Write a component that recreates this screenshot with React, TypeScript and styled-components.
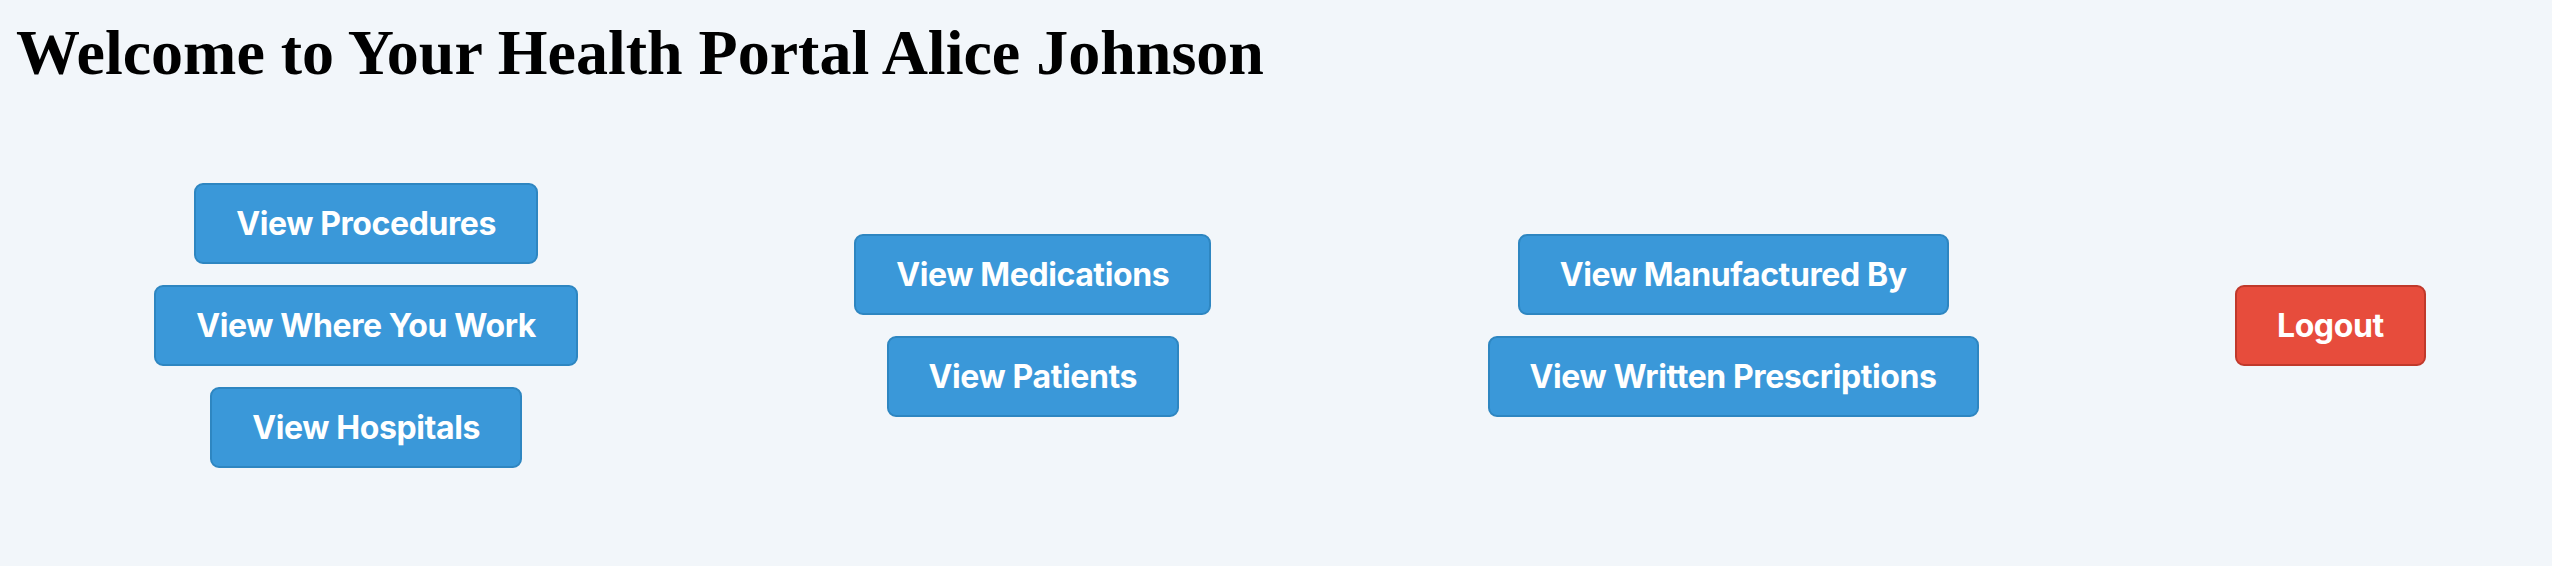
import React from "react";
import styled, { createGlobalStyle } from "styled-components";

const GlobalStyle = createGlobalStyle`
  html, body {
    margin: 0;
    padding: 0;
    background: #f2f6fa;
  }
  body {
    min-height: 566px;
  }
`;

const Page = styled.div`
  padding: 15px 8px 0 16px;
  box-sizing: border-box;
  min-height: 566px;
  background: #f2f6fa;
`;

const Title = styled.h1`
  margin: 0;
  font-family: "Liberation Serif", "Times New Roman", serif;
  font-weight: 700;
  font-size: 64px;
  line-height: 76px;
  color: #000;
`;

const Dashboard = styled.div`
  display: flex;
  flex-direction: row;
  justify-content: space-around;
  align-items: center;
  margin-top: 92px;
`;

const Column = styled.div`
  display: flex;
  flex-direction: column;
  align-items: center;
  gap: 21px;
`;

const Button = styled.button<{ $variant?: "primary" | "danger" }>`
  font-family: Inter, "Noto Sans", sans-serif;
  font-weight: 700;
  font-size: 32px;
  line-height: 37px;
  letter-spacing: -0.4px;
  color: #fff;
  padding: 20px 40px;
  margin: 0 ${(p) => (p.$variant === "danger" ? 0 : 20)}px;
  border-radius: 9px;
  border: 2px solid ${(p) => (p.$variant === "danger" ? "#c0392b" : "#2e86c1")};
  background: ${(p) => (p.$variant === "danger" ? "#e74c3c" : "#3a98d9")};
  cursor: pointer;
  white-space: nowrap;
`;

const columns: string[][] = [
  ["View Procedures", "View Where You Work", "View Hospitals"],
  ["View Medications", "View Patients"],
  ["View Manufactured By", "View Written Prescriptions"],
];

export default function App() {
  return (
    <>
      <GlobalStyle />
      <Page>
        <Title>Welcome to Your Health Portal Alice Johnson</Title>
        <Dashboard>
          {columns.map((col, i) => (
            <Column key={i}>
              {col.map((label) => (
                <Button key={label} $variant="primary">
                  {label}
                </Button>
              ))}
            </Column>
          ))}
          <Column>
            <Button $variant="danger">Logout</Button>
          </Column>
        </Dashboard>
      </Page>
    </>
  );
}
